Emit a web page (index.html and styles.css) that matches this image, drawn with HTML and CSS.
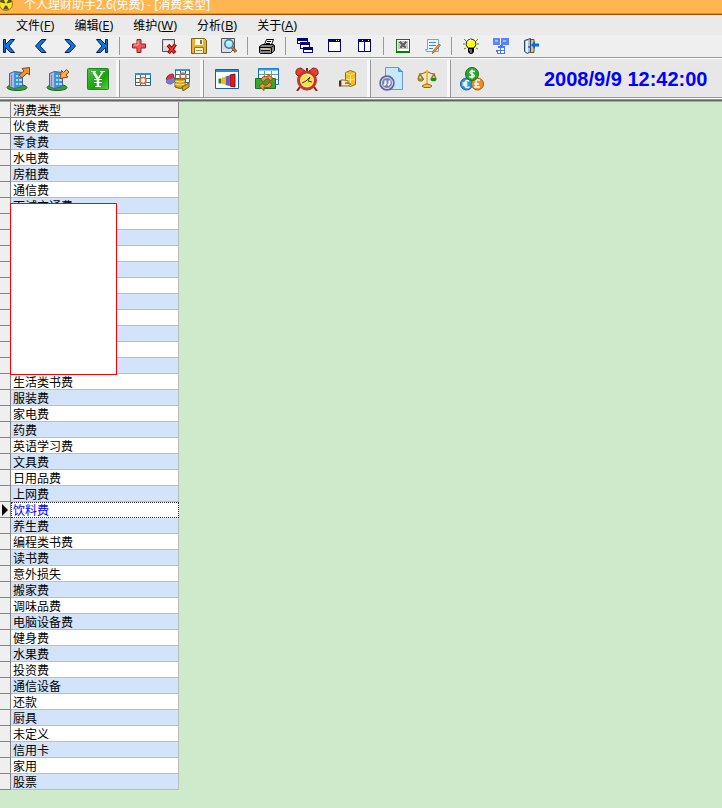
FILE: index.html
```html
<!DOCTYPE html>
<html lang="zh-CN">
<head>
<meta charset="utf-8">
<title>个人理财助手2.6(免费) - [消费类型]</title>
<link rel="stylesheet" href="styles.css">
</head>
<body>
<header class="titlebar">
  <svg class="app-icon" width="14" height="14" viewBox="0 0 14 14" aria-hidden="true">
    <circle cx="7" cy="7" r="6.500" fill="#ffe629" stroke="#8c7b12"/>
    <path d="M7 7L1 5A6 6 0 0 1 4 1.500zM7 7l6-2A6 6 0 0 0 10 1.500zM7 7l-3 5.500h6z" fill="#5b5417"/>
    <circle cx="7" cy="7" r="1.500" fill="#ffe629"/>
  </svg>
  <h1 class="title">个人理财助手2.6(免费) - [消费类型]</h1>
</header>

<nav class="menubar">
  <button class="menu">文件<span class="key">(<u>F</u>)</span></button>
  <button class="menu">编辑<span class="key">(<u>E</u>)</span></button>
  <button class="menu">维护<span class="key">(<u>W</u>)</span></button>
  <button class="menu">分析<span class="key">(<u>B</u>)</span></button>
  <button class="menu">关于<span class="key">(<u>A</u>)</span></button>
</nav>

<div class="toolbar" role="toolbar" aria-label="记录">
  <div class="tools">
    <button class="tool" aria-label="首条"><svg viewBox="0 0 16 16"><path d="M1.500 1.500h2v5l5-5h4L7 8l5.500 6.500h-4l-5-5v5h-2z" fill="#0878e8" stroke="#001a50"/></svg></button>
    <button class="tool" aria-label="上一条"><svg viewBox="0 0 16 16"><path d="M9.500 1.500h4.500L8 8l6 6.500H9.500L3.500 8z" fill="#0878e8" stroke="#001a50"/></svg></button>
    <button class="tool" aria-label="下一条"><svg viewBox="0 0 16 16"><path d="M7.500 1.500H3L9 8l-6 6.500h4.500L13.500 8z" fill="#0878e8" stroke="#001a50"/></svg></button>
    <button class="tool" aria-label="末条"><svg viewBox="0 0 16 16"><path d="M15.500 1.500h-2v5l-5-5h-4L10 8l-5.500 6.500h4l5-5v5h2z" fill="#0878e8" stroke="#001a50"/></svg></button>
  </div>
  <div class="tools">
    <button class="tool" aria-label="新增"><svg viewBox="0 0 16 16"><path d="M6 1.500h4V6h4.500v4H10v4.500H6V10H1.500V6H6z" fill="#f0575c" stroke="#8d2430"/><path d="M7 3v4H3" fill="none" stroke="#ffb3b0"/></svg></button>
    <button class="tool" aria-label="删除"><svg viewBox="0 0 16 16"><path d="M1.500 1.500h12v9l-4 3h-8z" fill="#d7d7d7" stroke="#555"/><path d="M3 3h8v5H3z" fill="#eee"/><path d="M7 7l7 8M14.500 6.500L7.500 15" stroke="#7d0000" stroke-width="3.500"/><path d="M7.500 7.500l6 7M14 7l-6 7.500" stroke="#f33" stroke-width="1.700"/></svg></button>
    <button class="tool" aria-label="保存"><svg viewBox="0 0 16 16"><path d="M.5.500h13l2 2v13H.5z" fill="#e9b22e" stroke="#79611d"/><path d="M4 1h8v6H4z" fill="#fffbe5"/><path d="M9 2h2v4H9z" fill="#88712c"/><path d="M3.500 9.500h9v6h-9z" fill="#fff3b9" stroke="#97741b"/><path d="M5 12.500h6" stroke="#96906f"/></svg></button>
    <button class="tool" aria-label="查找"><svg viewBox="0 0 16 16"><path d="M.5.500h13v10l-4 4h-9z" fill="#dedede" stroke="#555"/><circle cx="8" cy="6" r="4.200" fill="#a8ebff" stroke="#307cac" stroke-width="1.500"/><path d="M6 5q2-3 4 0" stroke="#fff" fill="none"/><path d="M11 9l4 5" stroke="#8b5425" stroke-width="3"/><path d="M11 9l4 5" stroke="#e58b46"/></svg></button>
  </div>
  <div class="tools">
    <button class="tool" aria-label="打印"><svg viewBox="0 0 16 16"><path d="M5.500 6.500l2-5h7l-2 5" fill="#fff" stroke="#000"/><path d="M8 3.500h4M7 5.500h4" stroke="#000"/><path d="M.5 8.500l3-2h11l1 1v5l-3 3h-11l-1-1z" fill="#888" stroke="#000"/><path d="M1 9.500h11l3-2M2 12.500h9M12.500 10v5" fill="none" stroke="#000"/><path d="M2 11h9" stroke="#fff"/><path d="M9 10.500h2" stroke="#d4c000"/></svg></button>
  </div>
  <div class="tools">
    <button class="tool" aria-label="层叠"><svg class="crisp" viewBox="0 0 16 16"><path d="M0 0h11v6H0zM3 4h10v7H3zM6 9h10v6H6z" fill="#000080"/><path d="M1 3h9v1H3v1H1zM4 7h8v2H6v1H4zM7 12h8v2H7z" fill="#fff"/></svg></button>
    <button class="tool" aria-label="单窗口"><svg class="crisp" viewBox="0 0 16 16"><path d="M1 1h13v13H1z" fill="#000080"/><path d="M2 4h11v9H2zM9 2h1v1H9zM11 2h1v1h-1z" fill="#fff"/></svg></button>
    <button class="tool" aria-label="平铺"><svg class="crisp" viewBox="0 0 16 16"><path d="M1 1h13v13H1z" fill="#000080"/><path d="M2 4h5v9H2zM8 4h5v9H8zM5 2h1v1H5zM11 2h1v1h-1z" fill="#fff"/></svg></button>
  </div>
  <div class="tools">
    <button class="tool" aria-label="导出 Excel"><svg class="crisp" viewBox="0 0 16 16"><path d="M1 1h14v14H1z" fill="#008000"/><path d="M2 2h12v11H2z" fill="#fff"/><path d="M3 3h10v8H3z" fill="#c6c6c6"/><path d="M5 4l6 6M11 4l-6 6" stroke="#666" stroke-width="2"/></svg></button>
    <button class="tool" aria-label="记事"><svg viewBox="0 0 16 16"><path d="M2.500 1.500h11v12h-12l-1-2h2z" fill="#e9f6ff" stroke="#6ba7da"/><path d="M4 4.500h7M4 7.500h7M4 10.500h4" stroke="#3c87c8"/><path d="M15.500 7l-6 7-2 1.500.5-2.500 6-7z" fill="#ff9e27" stroke="#bf6416"/></svg></button>
  </div>
  <div class="tools">
    <button class="tool" aria-label="提示"><svg viewBox="0 0 16 16"><path d="M1 1l2 2M15 1l-2 2M0 6h2M14 6h2M1 11l2-1M15 11l-2-1" stroke="#777400"/><path d="M5 10Q2 7 3.500 3.500q4.500-5 9 0 1.500 3.500-1.500 6.500z" fill="#ff0" stroke="#222"/><path d="M6 3l2-1M6 5V4" stroke="#fff" stroke-width="1.500"/><path d="M5 10h6v4l-2 2H7l-2-2z" fill="#000"/><path d="M6 12h3M7 14h2" stroke="#ccc"/></svg></button>
    <button class="tool" aria-label="模块"><svg class="crisp" viewBox="0 0 16 16"><path d="M0 0h7v7H0zM8 0h8v7H8z" fill="#5a83ff"/><path d="M2 2h3v2H2zM10 2h3v2h-3z" fill="#a9c0ff"/><path d="M3 12h2V8h2V7h3v1h2v8H4v-2H3z" fill="#4976f1"/><path d="M5 10h6v5H5z" fill="#fff"/><path d="M7 9h1v6H7zM5 12h6v1H5z" fill="#4976f1"/></svg></button>
    <button class="tool" aria-label="退出"><svg viewBox="0 0 16 16"><path d="M7 1.500h4v13H7z" fill="#dfc27b" stroke="#5d5430"/><path d="M1.500 2.500l6-2v13l-3 2-3-2z" fill="#a9bfe6" stroke="#37445f"/><path d="M4 3v11" stroke="#e9f3ff" stroke-width="2"/><path d="M6 8v2" stroke="#333"/><path d="M8 7l4-4v2.500h4v3h-4V11z" fill="#0069ee"/></svg></button>
  </div>
</div>

<div class="bands">
  <div class="band">
    <button class="big" aria-label="支出"><svg viewBox="0 0 24 24"><ellipse cx="11" cy="20.500" rx="10" ry="3" fill="#34a12a" stroke="#176216"/><path d="M3.500 6.500l5-2 8 1v14l-8 2-5-2z" fill="#3c94e0" stroke="#505b91"/><path d="M4 7l4-2v16l-4-2z" fill="#b6b6d6"/><path d="M5.500 8v11" stroke="#7e82b4"/><path d="M10 8h2v2h-2zM13 8h3v2h-3zM10 12h2v2h-2zM13 12h3v2h-3zM10 16h2v2h-2zM13 16h3v2h-3z" fill="#a9dcff"/><path d="M13 8l5-4-2-2.500 7.500-1V8L21 6l-5 5z" fill="#ef932f" stroke="#8b4817"/></svg></button>
    <button class="big" aria-label="收入"><svg viewBox="0 0 24 24"><ellipse cx="11" cy="20.500" rx="10" ry="3" fill="#34a12a" stroke="#176216"/><path d="M3.500 6.500l5-2 8 1v14l-8 2-5-2z" fill="#3c94e0" stroke="#505b91"/><path d="M4 7l4-2v16l-4-2z" fill="#b6b6d6"/><path d="M5.500 8v11" stroke="#7e82b4"/><path d="M10 8h2v2h-2zM13 8h3v2h-3zM10 12h2v2h-2zM13 12h3v2h-3zM10 16h2v2h-2zM13 16h3v2h-3z" fill="#a9dcff"/><path d="M20.500 2.500l-3 3-2-2-1.500 8 8-1.500-2-2 3-3z" fill="#f8ad4c" stroke="#8b4817"/></svg></button>
    <button class="big" aria-label="货币"><svg viewBox="0 0 24 24"><defs><linearGradient id="yen" x2="1" y2="1"><stop stop-color="#56bd4f"/><stop offset=".6" stop-color="#18a30b"/><stop offset="1" stop-color="#69ca47"/></linearGradient></defs><rect x="1.500" y="1.500" width="21" height="21" rx="1" fill="url(#yen)" stroke="#238226"/><path d="M7.500 5l4.500 7M12 12v7" fill="none" stroke="#fff" stroke-width="2.500"/><path d="M16.500 5L12 12" stroke="#fff" stroke-width="1.500"/><path d="M8 12.500h8M8 15.500h8M5 4.500h5M14 4.500h5M9 19.500h6" stroke="#fff"/></svg></button>
  </div>
  <div class="band band-tight">
    <button class="big" aria-label="明细"><svg viewBox="0 0 24 24"><path d="M4.500 6.500h15v12h-15z" fill="#fff" stroke="#1769ae"/><path d="M4 6h16v2H4z" fill="#2e91e4"/><path d="M5 11.500h14M5 15.500h14M9.500 8v10M14.500 8v10" stroke="#407565"/><circle cx="12" cy="13.500" r="3" fill="#fff" stroke="#f16338" stroke-width="1.700"/></svg></button>
    <button class="big" aria-label="统计"><svg viewBox="0 0 24 24"><path d="M9.500 2.500h14v13h-14z" fill="#fff" stroke="#1870b7"/><path d="M10 3h13" stroke="#2998ed" stroke-width="2"/><path d="M10 7.500h13M10 11.500h13M14.500 4v11M19.500 4v11" stroke="#407565"/><circle cx="17" cy="9" r="3" fill="none" stroke="#f16338" stroke-width="1.500"/><path d="M0 13q1-6 7-6l2 7-4 3q-5 0-5-4z" fill="#d8383a" stroke="#762b43"/><path d="M0 13l8-2 2 3-5 3q-5 0-5-4z" fill="#6683db"/><path d="M9 12h10v8q-5 3-10 0z" fill="#d2a31b" stroke="#795f0a"/><path d="M9 14q5 2 10 0M9 17q5 2 10 0" fill="none" stroke="#fff082"/><path d="M16 20l7-4v4l-6 4z" fill="#d5a51b" stroke="#785b0d"/></svg></button>
  </div>
  <div class="band band-charts">
    <button class="big" aria-label="图表"><svg viewBox="0 0 24 24"><path d="M.5 2.500h23v19H.5z" fill="#fff" stroke="#115db0"/><path d="M1 3h22v2H1z" fill="#258ed8"/><path d="M3.500 11.500h3v5h-3z" fill="#427b2a"/><path d="M7 10.500l3-.5v7.500l-3-.5z" fill="#f0bb20"/><path d="M10.500 9.500l4-1V19l-4-1z" fill="#6958bb"/><path d="M15 8l5-1v13l-5-1z" fill="#dd1822" stroke="#87131a"/></svg></button>
    <button class="big" aria-label="转账"><svg viewBox="0 0 24 24"><path d="M3.500 1.500h20v16h-20z" fill="#fff" stroke="#1870b7"/><path d="M4 2.500h19" stroke="#2998ed" stroke-width="2"/><path d="M4 7.500h19M4 12.500h19M9.500 4v13M16.500 4v13" stroke="#63a68d"/><path d="M.5 11.500h20v10H.5z" fill="#35a72c" stroke="#16751a"/><path d="M13 10V7l5 4.500-3 2.500-1-2q-4-1-5 3l-3-2q1-5 7-3z" fill="#ef923c" stroke="#984b18"/><path d="M9 20v3.500l-5-4.500 4-3 1 2q4 1 5-3l3 2q-1 5-8 3z" fill="#ef923c" stroke="#984b18"/></svg></button>
    <button class="big" aria-label="提醒"><svg viewBox="0 0 24 24"><path d="M5 20l-3 4M19 20l3 4M12 1v4" stroke="#842019" stroke-width="2"/><path d="M1 7Q0 1 6 1l4 3-7 5zM23 7q1-6-5-6l-4 3 7 5z" fill="#e64230" stroke="#8a231d"/><circle cx="12" cy="13.500" r="8.500" fill="#fff0a0" stroke="#cf321e" stroke-width="3"/><circle cx="12" cy="13.500" r="5.500" fill="#ffe13b"/><path d="M7 16l4-2 4-4-2 4 4 1" fill="none" stroke="#333"/></svg></button>
    <button class="big" aria-label="借贷"><svg viewBox="0 0 24 24"><path d="M10.500 5.500l5-2 5 2v12l-5 2-5-2z" fill="#f5bd24" stroke="#9c6910"/><path d="M11 6l4.500 2L20 6M15.500 8v11M11 12l4.500 1 4.500-1" fill="none" stroke="#ffeb82"/><path d="M6 13h3l4 1v2h-3l6 1-3 2H6z" fill="#ffe4b7" stroke="#876b43"/><path d="M5 13.500v6" stroke="#333" stroke-width="2"/></svg></button>
  </div>
  <div class="band band-reports">
    <button class="big" aria-label="单据"><svg viewBox="0 0 24 24"><path d="M6.500.500h13l4 4v18h-17z" fill="#c7e8fc" stroke="#699dc9"/><path d="M19.500.500v4h4" fill="#61aee3" stroke="#4c8ec4"/><circle cx="8" cy="16" r="7" fill="#7a80b3" stroke="#5b6197" stroke-width="1.500"/><circle cx="8" cy="16" r="5.500" fill="none" stroke="#e1e3f3"/><path d="M6.500 13.500v3l-1.500 2M10.500 13.500v3L9 18.500" fill="none" stroke="#fff" stroke-width="2"/></svg></button>
    <button class="big" aria-label="平衡"><svg viewBox="0 0 24 24"><path d="M4 7q4 0 7-2h2q3 2 7 2M12 4v14M5 7l-2 5M5 7l3 5M19 7l-3 5M19 7l2 5" fill="none" stroke="#a87c0b" stroke-width="1.500"/><path d="M12 3v15" stroke="#edc12e" stroke-width="2"/><path d="M3 12h6l-2 2H4z" fill="#dfad1d" stroke="#8d6b12"/><ellipse cx="18.500" cy="12.500" rx="3" ry="1.800" fill="#238a23"/><path d="M7 19q5-4 10 0l-2 1.500H9z" fill="#f3c423" stroke="#8d6b12"/></svg></button>
  </div>
  <div class="band band-last">
    <button class="big" aria-label="汇率"><svg viewBox="0 0 24 24"><circle cx="6.500" cy="17" r="6" fill="#2d90de" stroke="#1961a0"/><path d="M9.500 14q-4-2-5 3 1 5 5 3M2.500 16h5M2.500 18h5" fill="none" stroke="#fff" stroke-width="1.500"/><circle cx="17.500" cy="17" r="6" fill="#f28d21" stroke="#aa5716"/><path d="M20 13.500q-4-2-4 1.500v3l-1 2h5M14 17h5" fill="none" stroke="#fff" stroke-width="1.500"/><circle cx="12" cy="7" r="6.500" fill="#27a927" stroke="#137219"/><path d="M15 4.500q-5-1.500-5 1 0 1 2 1.500 3 1 2 2.500-1 1-5 0M12 2.500v9" fill="none" stroke="#fff" stroke-width="1.400"/></svg></button>
    <time class="clock" datetime="2008-09-09T12:42:00">2008/9/9 12:42:00</time>
  </div>
</div>

<main class="workspace">
  <table class="grid">
    <colgroup><col class="col-mark"><col class="col-name"></colgroup>
    <thead><tr><td class="mark"></td><th scope="col">消费类型</th></tr></thead>
    <tbody>
      <tr><td class="mark"></td><td>伙食费</td></tr>
      <tr><td class="mark"></td><td>零食费</td></tr>
      <tr><td class="mark"></td><td>水电费</td></tr>
      <tr><td class="mark"></td><td>房租费</td></tr>
      <tr><td class="mark"></td><td>通信费</td></tr>
      <tr><td class="mark"></td><td>面试交通费</td></tr>
      <tr><td class="mark"></td><td></td></tr>
      <tr><td class="mark"></td><td></td></tr>
      <tr><td class="mark"></td><td></td></tr>
      <tr><td class="mark"></td><td></td></tr>
      <tr><td class="mark"></td><td></td></tr>
      <tr><td class="mark"></td><td></td></tr>
      <tr><td class="mark"></td><td></td></tr>
      <tr><td class="mark"></td><td></td></tr>
      <tr><td class="mark"></td><td></td></tr>
      <tr><td class="mark"></td><td></td></tr>
      <tr><td class="mark"></td><td>生活类书费</td></tr>
      <tr><td class="mark"></td><td>服装费</td></tr>
      <tr><td class="mark"></td><td>家电费</td></tr>
      <tr><td class="mark"></td><td>药费</td></tr>
      <tr><td class="mark"></td><td>英语学习费</td></tr>
      <tr><td class="mark"></td><td>文具费</td></tr>
      <tr><td class="mark"></td><td>日用品费</td></tr>
      <tr><td class="mark"></td><td>上网费</td></tr>
      <tr class="current"><td class="mark"><svg class="pointer" width="6" height="12" viewBox="0 0 6 12" aria-hidden="true"><path d="M0 0l6 6-6 6z"/></svg></td><td>饮料费</td></tr>
      <tr><td class="mark"></td><td>养生费</td></tr>
      <tr><td class="mark"></td><td>编程类书费</td></tr>
      <tr><td class="mark"></td><td>读书费</td></tr>
      <tr><td class="mark"></td><td>意外损失</td></tr>
      <tr><td class="mark"></td><td>搬家费</td></tr>
      <tr><td class="mark"></td><td>调味品费</td></tr>
      <tr><td class="mark"></td><td>电脑设备费</td></tr>
      <tr><td class="mark"></td><td>健身费</td></tr>
      <tr><td class="mark"></td><td>水果费</td></tr>
      <tr><td class="mark"></td><td>投资费</td></tr>
      <tr><td class="mark"></td><td>通信设备</td></tr>
      <tr><td class="mark"></td><td>还款</td></tr>
      <tr><td class="mark"></td><td>厨具</td></tr>
      <tr><td class="mark"></td><td>未定义</td></tr>
      <tr><td class="mark"></td><td>信用卡</td></tr>
      <tr><td class="mark"></td><td>家用</td></tr>
      <tr><td class="mark"></td><td>股票</td></tr>
    </tbody>
  </table>
  <div class="cover"></div>
</main>
</body>
</html>
```
FILE: styles.css
```css
* {
  box-sizing: border-box;
}

body {
  margin: 0;
  min-height: 100vh;
  display: flex;
  flex-direction: column;
  background: #ceeaca;
  color: #000;
  font: 12px/16px "Liberation Sans", "Noto Sans CJK SC", sans-serif;
}

button {
  margin: 0;
  padding: 0;
  border: 0;
  background: none;
  color: inherit;
  font: inherit;
}

svg {
  display: block;
}

.crisp {
  shape-rendering: crispEdges;
}

/* Title bar */
.titlebar {
  display: flex;
  align-items: flex-end;
  gap: 11px;
  height: 15px;
  overflow: hidden;
  background: #ffb650;
  border-bottom: 1px solid #a04a08;
  box-shadow: inset 0 -1px #e59332;
}

.app-icon {
  flex: none;
  margin: 0 0 3px -1px;
}

.title {
  margin: 0 0 1px;
  color: #fff;
  font: 12px/16px "Noto Sans", "Noto Sans CJK SC", sans-serif;
  white-space: nowrap;
}

/* Menu */
.menubar {
  display: flex;
  gap: 20px;
  height: 20px;
  padding-left: 16px;
  background: #eaeaea;
  white-space: nowrap;
}

.menu {
  font: 12px/20px "Open Sans", "Noto Sans CJK SC", sans-serif;
}

.key {
  font-size: 13px;
}

/* Small icon toolbar */
.toolbar {
  display: flex;
  align-items: center;
  height: 22px;
  background: #efefef;
}

.tools {
  display: flex;
  gap: 14px;
  padding: 0 10px 0 11px;
}

.tools:first-child {
  padding: 0 11px 0 2px;
}

.tools + .tools {
  border-left: 1px solid #999;
}

.tool {
  flex: none;
  width: 16px;
  height: 18px;
}

.tool svg {
  width: 16px;
  height: 16px;
}

/* Large icon bands */
.bands {
  display: flex;
  height: 45px;
  background: #e7e7e7;
  border-top: 1px solid #999;
  border-bottom: 1px solid #aaa;
  box-shadow: inset 0 1px #fff, inset 0 -1px #606060, inset 0 -2px #999, inset 0 -3px #fff, inset 0 -4px #999;
}

.band {
  display: flex;
  align-items: center;
  gap: 16px;
  margin: 2px 0 4px;
  padding: 0 6px;
  border-right: 3px solid #f8f8f8;
}

.band + .band {
  border-left: 1px solid #999;
}

.band-tight {
  gap: 11px;
  padding: 0 10px 0 11px;
}

.band-charts {
  padding: 0 8px 0 11px;
}

.band-reports {
  gap: 12px;
  padding: 0 8px;
}

.band-last {
  flex: 1;
  gap: 60px;
  padding: 0 9px;
  border-right: 0;
}

.big {
  flex: none;
  width: 24px;
  height: 24px;
}

.clock {
  color: #00f;
  font-size: 20px;
  font-weight: bold;
  line-height: 24px;
  white-space: nowrap;
}

/* Data grid */
.workspace {
  position: relative;
  flex: 1;
  padding-bottom: 18px;
}

.grid {
  width: 179px;
  table-layout: fixed;
  border-spacing: 0;
}

.col-mark {
  width: 11px;
}

.grid th,
.grid td {
  height: 16px;
  padding: 3px 2px 0;
  border-right: 1px solid #bdbdbd;
  border-bottom: 1px solid #bdbdbd;
  background: #fff;
  font-weight: normal;
  line-height: 12px;
  text-align: left;
  white-space: nowrap;
}

.grid tbody tr:nth-child(even) td {
  background: #d2e3fa;
}

.grid th,
.grid thead .mark,
.grid tbody tr .mark,
.grid tbody tr:nth-child(even) .mark {
  border-color: #848484;
  background: #efefef;
}

.grid .mark {
  padding: 0;
}

.grid .current td + td {
  padding: 2px 1px 0;
  border: 1px dotted #333;
  color: #00f;
}

.pointer {
  margin-left: 2px;
}

/* Blank panel over the rows */
.cover {
  position: absolute;
  top: 101px;
  left: 10px;
  width: 107px;
  height: 172px;
  background: #fff;
  border: 1px solid #f00;
}
```
